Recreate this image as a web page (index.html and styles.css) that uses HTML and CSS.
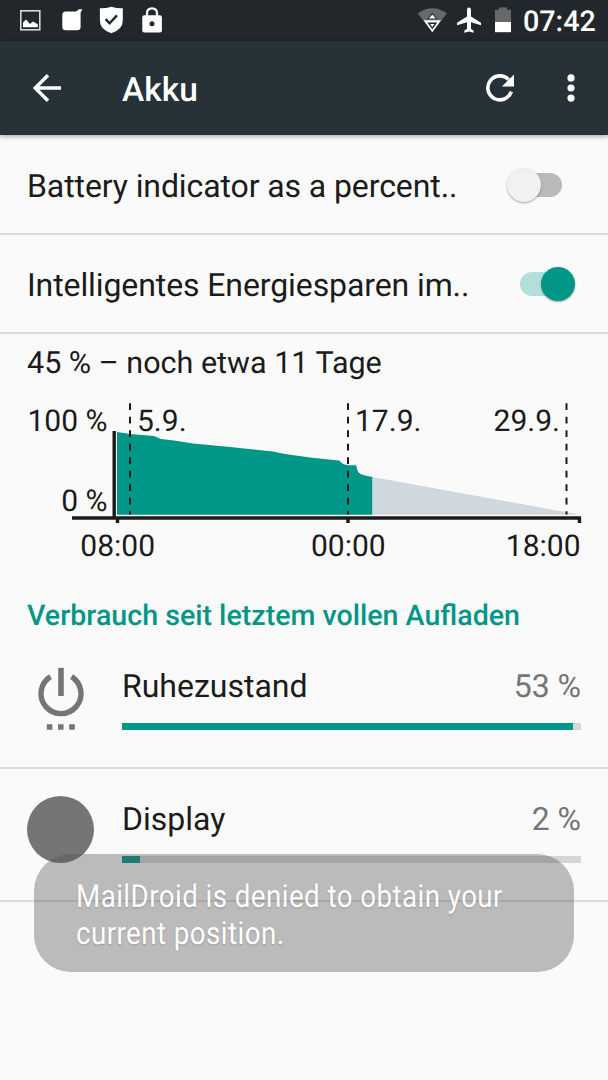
FILE: index.html
```html
<!DOCTYPE html>
<html lang="de">
<head>
    <meta charset="UTF-8">
    <meta name="viewport" content="width=device-width, initial-scale=1.0">
    <title>Akku</title>
    <link rel="stylesheet" href="styles.css">
</head>
<body>
    <div class="status-bar">
        <svg class="status-icons" width="170" height="41" viewBox="0 0 170 41">
            <!-- screenshot -->
            <rect x="20.8" y="10.8" width="19" height="19" fill="none" stroke="#d5d7d8" stroke-width="1.6"/>
            <path d="M23 27.3V22.5L26 19.6L30 24L33 21.6L37.8 24.2V27.3Z" fill="#fff"/>
            <!-- message -->
            <path d="M65.5 11.5H76L79 9.3H82.5L80.6 12.5V27Q80.6 30.3 77 30.3H66Q62.3 30.3 62.3 27V15Q62.3 11.5 65.5 11.5Z" fill="#fff"/>
            <!-- shield -->
            <path d="M111.3 6.8Q117 8.5 122.8 8.3V20.5Q122.8 29.5 111.3 33.3Q99.9 29.5 99.9 20.5V8.3Q106 8.5 111.3 6.8Z" fill="#fff"/>
            <path d="M105.6 19.2L109.6 23.3L117 15.4" fill="none" stroke="#21272b" stroke-width="2.4"/>
            <!-- lock -->
            <path d="M147 16.5V13.3Q147 8.3 152 8.3Q157 8.3 157 13.3V16.5" fill="none" stroke="#fff" stroke-width="2.2"/>
            <rect x="142.3" y="15.3" width="19.6" height="17.2" rx="2" fill="#fff"/>
            <circle cx="152" cy="23.8" r="2.5" fill="#21272b"/>
        </svg>
        <svg class="status-icons" width="108" height="41" viewBox="411 0 108 41">
            <!-- wifi -->
            <path d="M417.7 13.3Q432.3 3 447 13.3L432.3 32.3Z" fill="#65696b"/>
            <path d="M423.6 20.2H441L432.3 32.3Z" fill="#fff"/>
            <path d="M427 19.2L432.3 12.8L437.6 19.2Z" fill="#21272b"/>
            <path d="M428.8 18.6L432.3 14.4L435.8 18.6Z" fill="#fff"/>
            <path d="M427.3 22.6H437.3L432.3 29.2Z" fill="#21272b"/>
            <path d="M430.2 24.1H434.4L432.3 27Z" fill="#fff"/>
            <!-- airplane -->
            <path d="M481 25.3V22.7L471 16.5V9.7Q470.8 7.6 469 7.6Q467.1 7.6 467 9.7V16.5L457 22.7V25.3L467 22.2V28.7L464.3 30.7V32.7L469 31.5L473.6 32.7V30.7L471 28.7V22.2Z" fill="#fff"/>
            <!-- battery -->
            <path d="M495 9.7H499V7.6H507V9.7H511V22H495Z" fill="#65696b"/>
            <rect x="495" y="22" width="16" height="10.2" fill="#fff"/>
        </svg>
        <span class="clock">07:42</span>
    </div>

    <div class="toolbar">
        <svg class="back" width="28" height="28" viewBox="0 0 28 28">
            <path d="M28 14H3M15 1.2L2.2 14L15 26.8" fill="none" stroke="#fff" stroke-width="3.4"/>
        </svg>
        <h1>Akku</h1>
        <svg class="refresh" width="28" height="28" viewBox="0 0 28 28">
            <path d="M25.3 17.6A12 12 0 1 1 22.6 5.6" fill="none" stroke="#fff" stroke-width="3.6"/>
            <path d="M28 .5V12.6H15.9Z" fill="#fff"/>
        </svg>
        <svg class="more" width="8" height="28" viewBox="0 0 8 28">
            <circle cx="4" cy="3.9" r="3.6" fill="#fff"/>
            <circle cx="4" cy="14" r="3.6" fill="#fff"/>
            <circle cx="4" cy="24.1" r="3.6" fill="#fff"/>
        </svg>
    </div>

    <div class="pref">
        <span class="pref-title">Battery indicator as a percent..</span>
        <span class="switch"></span>
    </div>
    <div class="pref">
        <span class="pref-title">Intelligentes Energiesparen im..</span>
        <span class="switch on"></span>
    </div>

    <div class="history">
        <p class="summary">45 % – noch etwa 11 Tage</p>
        <svg class="chart" width="608" height="190" viewBox="0 385 608 190">
            <path d="M117 432L130 434L154 436L161 439L174 440.5L193 443.5L230 447L273 451.5L285 454L310 457.5L339 460.5L343 464L348 465.3H356L358 472L361 474.3L367 476L372.5 477V514.7H117Z" fill="#009688"/>
            <path d="M372.5 477L580 514.7H372.5Z" fill="#cfd8dc"/>
            <path d="M114.2 431V518" stroke="#1b1b1b" stroke-width="3.4"/>
            <path d="M72 518H581M117.5 518V523M348 518V523M579.5 518V523" fill="none" stroke="#1b1b1b" stroke-width="3.4"/>
            <path d="M130 403.3V514.5M348 403.3V514.5M566.5 403.3V514.5" stroke="#1b1b1b" stroke-width="2" stroke-dasharray="6.75 6.75"/>
            <text x="107.5" y="431" text-anchor="end">100 %</text>
            <text x="107.5" y="511" text-anchor="end">0 %</text>
            <text x="137" y="431">5.9.</text>
            <text x="355" y="431">17.9.</text>
            <text x="560" y="431" text-anchor="end">29.9.</text>
            <text x="117.7" y="556" text-anchor="middle">08:00</text>
            <text x="348.3" y="556" text-anchor="middle">00:00</text>
            <text x="580.5" y="556" text-anchor="end">18:00</text>
        </svg>
    </div>

    <h2>Verbrauch seit letztem vollen Aufladen</h2>

    <div class="usage">
        <svg class="app-icon" width="67" height="68" viewBox="27 662 67 68">
            <path d="M50.5 676.6A20 20 0 1 0 71.5 676.6" fill="none" stroke="#757575" stroke-width="5.4"/>
            <path d="M61 667.8V696" stroke="#757575" stroke-width="5.6"/>
            <path d="M46.8 727H75.5" stroke="#757575" stroke-width="5.6" stroke-dasharray="5.6 5.6"/>
        </svg>
        <div class="details">
            <div class="labels"><span class="name">Ruhezustand</span><span class="value">53 %</span></div>
            <div class="bar"><div class="fill" style="width: 98.3%"></div></div>
        </div>
    </div>
    <div class="usage">
        <div class="app-icon round"></div>
        <div class="details">
            <div class="labels"><span class="name">Display</span><span class="value">2 %</span></div>
            <div class="bar"><div class="fill" style="width: 4%"></div></div>
        </div>
    </div>

    <div class="toast">
        <p>MailDroid is denied to obtain your<br>current position.</p>
    </div>
</body>
</html>
```
FILE: styles.css
```css
* {
    box-sizing: border-box;
}
body {
    position: relative;
    margin: 0;
    height: 1080px;
    overflow: hidden;
    font-family: Roboto, sans-serif;
    text-rendering: geometricPrecision;
    background-color: #fafafa;
    color: #1b1b1b;
}
svg {
    display: block;
    flex: none;
}
h1, h2, p {
    margin: 0;
}
.status-bar {
    display: flex;
    justify-content: space-between;
    height: 41px;
    background: #21272b;
}
.status-bar .status-icons:first-child {
    margin-right: auto;
}
.clock {
    width: 89px;
    padding-left: 4px;
    line-height: 45px;
    font-size: 28.7px;
    font-weight: 500;
    color: #fff;
}
.toolbar {
    display: flex;
    align-items: center;
    height: 94px;
    padding: 0 33px;
    background: #263238;
    color: #fff;
    box-shadow: 0 1px 5px rgba(0,0,0,0.4);
}
.toolbar h1 {
    margin-left: 61px;
    padding-top: 5px;
    font-size: 33.5px;
    font-weight: 500;
}
.refresh {
    margin-left: auto;
}
.more {
    margin-left: 53px;
}
.pref {
    display: flex;
    align-items: center;
    justify-content: space-between;
    height: 99.5px;
    padding: 2px 33px 0 27px;
    border-bottom: 2px solid #dcdcdc;
}
.pref-title {
    padding-top: 2px;
    font-size: 32px;
    letter-spacing: -0.1px;
    white-space: nowrap;
}
/* the knob overlaps the track */
.switch {
    position: relative;
    width: 42px;
    height: 24px;
    margin-right: 13px;
    border-radius: 12px;
    background: #b9b9b9;
}
.switch::after {
    content: "";
    position: absolute;
    top: -5px;
    left: -13px;
    width: 34px;
    height: 34px;
    border-radius: 50%;
    background: #f1f1f1;
    box-shadow: 0 1px 2px rgba(0,0,0,0.35);
}
.switch.on {
    background: #b2dfdb;
}
.switch.on::after {
    left: 21px;
    background: #009688;
}
.summary {
    padding: 12px 27px 0;
    line-height: 36px;
    font-size: 30.5px;
}
.chart {
    margin-top: 3px;
}
.chart text {
    font-size: 30px;
    fill: #1b1b1b;
}
h2 {
    height: 60px;
    padding: 20px 27px 0;
    line-height: 40px;
    font-size: 28.6px;
    font-weight: 500;
    color: #009688;
}
.usage {
    display: flex;
    gap: 28px;
    height: 133.5px;
    padding: 27px 27px 0;
    border-bottom: 2px solid #dcdcdc;
}
.usage + .usage {
    padding-top: 26px;
}
.app-icon {
    flex: none;
    width: 67px;
    height: 68px;
}
.round {
    height: 67px;
    margin-top: 1px;
    border-radius: 50%;
    background: #757575;
}
.details {
    flex: 1;
}
.labels {
    display: flex;
    justify-content: space-between;
    height: 61px;
    line-height: 48px;
    font-size: 32px;
}
.value {
    color: #757575;
}
.bar {
    height: 7px;
    background: #d3d7da;
}
.fill {
    height: 100%;
    background: #009688;
}
.toast {
    position: absolute;
    left: 34px;
    top: 854px;
    width: 540px;
    height: 118px;
    padding: 24px 42px;
    border-radius: 37px;
    background: rgba(80,80,80,0.37);
    color: #fff;
}
.toast p {
    transform: scaleX(0.88);
    transform-origin: left;
    line-height: 37px;
    font-size: 31.5px;
    letter-spacing: 0.5px;
    white-space: nowrap;
    text-shadow: 0 1px 2px rgba(0,0,0,0.2);
}
```
